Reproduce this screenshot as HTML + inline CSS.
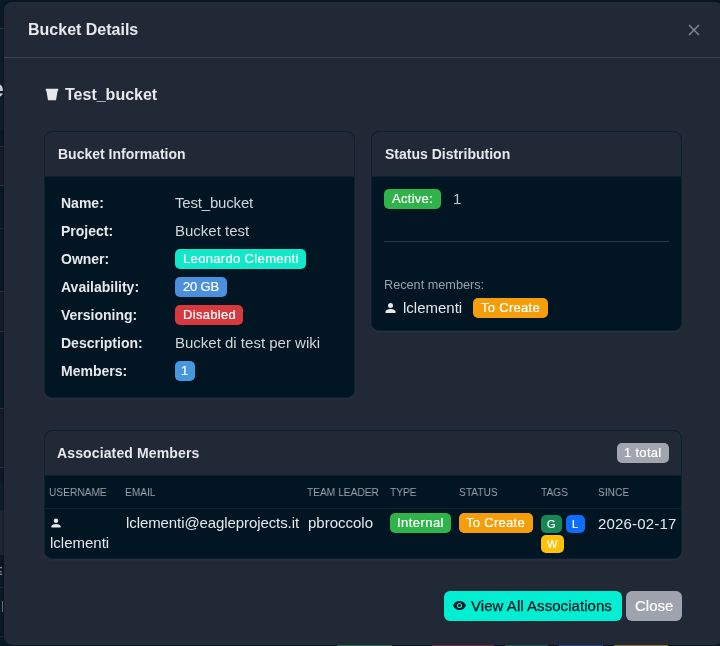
<!DOCTYPE html>
<html><head><meta charset="utf-8"><style>
html,body{margin:0;padding:0;width:720px;height:646px;overflow:hidden;background:#0a1927;font-family:"Liberation Sans",sans-serif}
.t{position:absolute;white-space:nowrap;will-change:transform}
.b{position:absolute}
.bd{position:absolute;text-align:center;white-space:nowrap}
.bd span{will-change:transform;display:inline-block;-webkit-text-stroke:0.2px currentColor}
</style></head><body>
<div class="b" style="left:0px;top:0px;width:4px;height:28px;background:#0c1a28;"></div>
<div class="b" style="left:0px;top:28px;width:4px;height:1px;background:#2a3442;"></div>
<div class="b" style="left:0px;top:29px;width:4px;height:100px;background:#0d1d2c;"></div>
<div class="b" style="left:0px;top:129px;width:4px;height:17px;background:#091826;"></div>
<div class="b" style="left:0px;top:146px;width:4px;height:1px;background:#2a3442;"></div>
<div class="b" style="left:0px;top:147px;width:4px;height:38px;background:#141c2b;"></div>
<div class="b" style="left:0px;top:185px;width:4px;height:1px;background:#2a3442;"></div>
<div class="b" style="left:0px;top:186px;width:4px;height:42px;background:#0a1927;"></div>
<div class="b" style="left:0px;top:228px;width:4px;height:1px;background:#14283a;"></div>
<div class="b" style="left:0px;top:229px;width:4px;height:62px;background:#0a1927;"></div>
<div class="b" style="left:0px;top:291px;width:4px;height:1px;background:#2a3442;"></div>
<div class="b" style="left:0px;top:292px;width:4px;height:39px;background:#141c2b;"></div>
<div class="b" style="left:0px;top:331px;width:4px;height:1px;background:#2a3442;"></div>
<div class="b" style="left:0px;top:332px;width:4px;height:76px;background:#0a1927;"></div>
<div class="b" style="left:0px;top:408px;width:4px;height:1px;background:#2a3442;"></div>
<div class="b" style="left:0px;top:409px;width:4px;height:58px;background:#141c2b;"></div>
<div class="b" style="left:0px;top:467px;width:4px;height:1px;background:#2a3442;"></div>
<div class="b" style="left:0px;top:468px;width:4px;height:16px;background:#0a1927;"></div>
<div class="b" style="left:0px;top:484px;width:4px;height:26px;background:#0d1e2d;"></div>
<div class="b" style="left:0px;top:510px;width:4px;height:45px;background:#1d2634;"></div>
<div class="b" style="left:0px;top:555px;width:4px;height:32px;background:#0a1927;"></div>
<div class="b" style="left:0px;top:587px;width:4px;height:1px;background:#1a2838;"></div>
<div class="b" style="left:0px;top:588px;width:4px;height:48px;background:#0a1927;"></div>
<div class="b" style="left:0px;top:636px;width:4px;height:1px;background:#1a2838;"></div>
<div class="b" style="left:0px;top:637px;width:4px;height:9px;background:#0a1927;"></div>
<div class="t" style="left:-9.5px;top:75.33px;font-size:23px;line-height:29px;font-weight:700;color:#c9ccd1;letter-spacing:0px;">e</div>
<div class="t" style="left:-4.6px;top:564.02px;font-size:11.5px;line-height:14px;font-weight:700;color:#8a9098;letter-spacing:0px;">E</div>
<div class="b" style="left:2px;top:601px;width:1px;height:11px;background:#6d737c;"></div>
<div class="b" style="left:337px;top:645px;width:55px;height:1px;background:#2f7d4a;"></div>
<div class="b" style="left:432px;top:645px;width:62px;height:1px;background:#8a3446;"></div>
<div class="b" style="left:505px;top:645px;width:43px;height:1px;background:#1f6a5a;"></div>
<div class="b" style="left:559px;top:645px;width:44px;height:1px;background:#2a5aa8;"></div>
<div class="b" style="left:614px;top:645px;width:54px;height:1px;background:#a88a2a;"></div>
<div class="b" style="left:4px;top:2px;width:719px;height:643px;background:#212937;border-radius:8px;box-shadow:0 0 3px rgba(0,0,0,.5)"></div>
<div class="t" style="left:28px;top:20.46px;font-size:16px;line-height:20px;font-weight:700;color:#e6e8eb;letter-spacing:0px;">Bucket Details</div>
<svg class="b" style="left:688px;top:24px" width="12" height="12" viewBox="0 0 12 12"><path d="M1 1L11 11M11 1L1 11" stroke="#858a93" stroke-width="1.4"/></svg>
<div class="b" style="left:4px;top:57px;width:720px;height:1px;background:#3a4251;"></div>
<svg class="b" style="left:45px;top:88px" width="14" height="13" viewBox="0 0 14 13"><path d="M0.8 0.8H13.2V2.8H12.6L11 12.2H3L1.4 2.8H0.8Z" fill="#e6e8eb"/></svg>
<div class="t" style="left:65px;top:84.76px;font-size:16px;line-height:20px;font-weight:700;color:#e6e8eb;letter-spacing:0px;">Test_bucket</div>
<div class="b" style="left:44px;top:131px;width:309px;height:265px;border:1px solid #0b2033;border-radius:8px;background:#011522;overflow:hidden;box-shadow:0 1px 3px rgba(255,255,255,.05)"><div style="position:absolute;left:0;top:0;right:0;height:44px;background:#212937;border-bottom:1px solid #0b2033"></div></div>
<div class="t" style="left:57.5px;top:145.15px;font-size:14px;line-height:18px;font-weight:700;color:#e6e8eb;letter-spacing:0px;">Bucket Information</div>
<div class="t" style="left:60.8px;top:194.15px;font-size:14px;line-height:18px;font-weight:700;color:#e6e8eb;letter-spacing:0px;">Name:</div>
<div class="t" style="left:60.8px;top:222.15px;font-size:14px;line-height:18px;font-weight:700;color:#e6e8eb;letter-spacing:0px;">Project:</div>
<div class="t" style="left:60.8px;top:250.15px;font-size:14px;line-height:18px;font-weight:700;color:#e6e8eb;letter-spacing:0px;">Owner:</div>
<div class="t" style="left:60.8px;top:278.15px;font-size:14px;line-height:18px;font-weight:700;color:#e6e8eb;letter-spacing:0px;">Availability:</div>
<div class="t" style="left:60.8px;top:306.15px;font-size:14px;line-height:18px;font-weight:700;color:#e6e8eb;letter-spacing:0px;">Versioning:</div>
<div class="t" style="left:60.8px;top:334.15px;font-size:14px;line-height:18px;font-weight:700;color:#e6e8eb;letter-spacing:0px;">Description:</div>
<div class="t" style="left:60.8px;top:362.15px;font-size:14px;line-height:18px;font-weight:700;color:#e6e8eb;letter-spacing:0px;">Members:</div>
<div class="t" style="left:175px;top:193.30px;font-size:15px;line-height:19px;font-weight:400;color:#d2d5da;letter-spacing:-0.18px;">Test_bucket</div>
<div class="t" style="left:175px;top:221.30px;font-size:15px;line-height:19px;font-weight:400;color:#d2d5da;letter-spacing:0px;">Bucket test</div>
<div class="bd" style="left:175px;top:249px;width:131px;height:20px;background:#10e8c9;border-radius:5px;font-size:13px;line-height:20px;color:#fff;letter-spacing:0.34px;font-weight:400"><span style="position:relative;top:0px">Leonardo Clementi</span></div>
<div class="bd" style="left:175px;top:277px;width:52px;height:20px;background:#4a90dc;border-radius:5px;font-size:13px;line-height:20px;color:#fff;letter-spacing:-0.18px;font-weight:400"><span style="position:relative;top:0px">20 GB</span></div>
<div class="bd" style="left:175px;top:305px;width:68px;height:20px;background:#d63a3f;border-radius:5px;font-size:13px;line-height:20px;color:#fff;letter-spacing:0.3px;font-weight:400"><span style="position:relative;top:0px">Disabled</span></div>
<div class="t" style="left:175px;top:333.30px;font-size:15px;line-height:19px;font-weight:400;color:#d2d5da;letter-spacing:0px;">Bucket di test per wiki</div>
<div class="bd" style="left:175px;top:361px;width:20px;height:20px;background:#4597e0;border-radius:5px;font-size:13px;line-height:20px;color:#fff;letter-spacing:0px;font-weight:400"><span style="position:relative;top:0px">1</span></div>
<div class="b" style="left:371px;top:131px;width:309px;height:198px;border:1px solid #0b2033;border-radius:8px;background:#011522;overflow:hidden;box-shadow:0 1px 3px rgba(255,255,255,.05)"><div style="position:absolute;left:0;top:0;right:0;height:44px;background:#212937;border-bottom:1px solid #0b2033"></div></div>
<div class="t" style="left:384.5px;top:145.15px;font-size:14px;line-height:18px;font-weight:700;color:#e6e8eb;letter-spacing:0px;">Status Distribution</div>
<div class="bd" style="left:384px;top:189px;width:57px;height:20px;background:#2fb34a;border-radius:5px;font-size:13px;line-height:20px;color:#fff;letter-spacing:0.29px;font-weight:400"><span style="position:relative;top:0px">Active:</span></div>
<div class="t" style="left:452.5px;top:188.70px;font-size:15px;line-height:19px;font-weight:400;color:#c3c7cc;letter-spacing:0px;">1</div>
<div class="b" style="left:384px;top:241px;width:285px;height:1px;background:#2a3644;"></div>
<div class="t" style="left:384.2px;top:276.60px;font-size:12.7px;line-height:16px;font-weight:400;color:#9ba1a9;letter-spacing:0px;">Recent members:</div>
<svg class="b" style="left:385px;top:303px" width="11" height="10" viewBox="0 0 11 10"><circle cx="5.5" cy="2.6" r="2.5" fill="#e6e8eb"/><path d="M0.5 10V8.6C0.5 6.9 3.6 6 5.5 6S10.5 6.9 10.5 8.6V10Z" fill="#e6e8eb"/></svg>
<div class="t" style="left:402.7px;top:298.00px;font-size:15px;line-height:19px;font-weight:400;color:#e6e8eb;letter-spacing:0px;">lclementi</div>
<div class="bd" style="left:473px;top:298px;width:75px;height:20px;background:#f59e0b;border-radius:5px;font-size:13px;line-height:20px;color:#fff;letter-spacing:0.3px;font-weight:400"><span style="position:relative;top:0px">To Create</span></div>
<div class="b" style="left:44px;top:430px;width:636px;height:127px;border:1px solid #0b2033;border-radius:8px;background:#011522;overflow:hidden;box-shadow:0 1px 3px rgba(255,255,255,.05)"><div style="position:absolute;left:0;top:0;right:0;height:44px;background:#212937;border-bottom:1px solid #0b2033"></div></div>
<div class="t" style="left:57px;top:444.15px;font-size:14px;line-height:18px;font-weight:700;color:#e6e8eb;letter-spacing:0.13px;">Associated Members</div>
<div class="bd" style="left:617px;top:443px;width:52px;height:20px;background:#a0a5ae;border-radius:5px;font-size:13px;line-height:20px;color:#fff;letter-spacing:0.3px;font-weight:400"><span style="position:relative;top:0px">1 total</span></div>
<div class="t" style="left:48.7px;top:485.12px;font-size:11.5px;line-height:14px;font-weight:400;color:#9ba1a9;letter-spacing:0px;transform:scaleX(0.885);transform-origin:0 0;">USERNAME</div>
<div class="t" style="left:124.8px;top:485.12px;font-size:11.5px;line-height:14px;font-weight:400;color:#9ba1a9;letter-spacing:0px;transform:scaleX(0.885);transform-origin:0 0;">EMAIL</div>
<div class="t" style="left:307px;top:485.12px;font-size:11.5px;line-height:14px;font-weight:400;color:#9ba1a9;letter-spacing:0px;transform:scaleX(0.885);transform-origin:0 0;">TEAM LEADER</div>
<div class="t" style="left:389.6px;top:485.12px;font-size:11.5px;line-height:14px;font-weight:400;color:#9ba1a9;letter-spacing:0px;transform:scaleX(0.885);transform-origin:0 0;">TYPE</div>
<div class="t" style="left:458.6px;top:485.12px;font-size:11.5px;line-height:14px;font-weight:400;color:#9ba1a9;letter-spacing:0px;transform:scaleX(0.885);transform-origin:0 0;">STATUS</div>
<div class="t" style="left:541px;top:485.12px;font-size:11.5px;line-height:14px;font-weight:400;color:#9ba1a9;letter-spacing:0px;transform:scaleX(0.885);transform-origin:0 0;">TAGS</div>
<div class="t" style="left:597.6px;top:485.12px;font-size:11.5px;line-height:14px;font-weight:400;color:#9ba1a9;letter-spacing:0px;transform:scaleX(0.885);transform-origin:0 0;">SINCE</div>
<div class="b" style="left:45px;top:508px;width:636px;height:1px;background:#142230;"></div>
<svg class="b" style="left:51px;top:518px" width="10" height="10" viewBox="0 0 11 10"><circle cx="5.5" cy="2.6" r="2.5" fill="#e6e8eb"/><path d="M0.5 10V8.6C0.5 6.9 3.6 6 5.5 6S10.5 6.9 10.5 8.6V10Z" fill="#e6e8eb"/></svg>
<div class="t" style="left:49.7px;top:532.80px;font-size:15px;line-height:19px;font-weight:400;color:#e6e8eb;letter-spacing:0px;">lclementi</div>
<div class="t" style="left:125.6px;top:513.30px;font-size:15px;line-height:19px;font-weight:400;color:#e6e8eb;letter-spacing:-0.09px;">lclementi@eagleprojects.it</div>
<div class="t" style="left:307.8px;top:513.30px;font-size:15px;line-height:19px;font-weight:400;color:#e6e8eb;letter-spacing:0px;">pbroccolo</div>
<div class="bd" style="left:390px;top:513px;width:61px;height:20px;background:#2fb34a;border-radius:5px;font-size:13px;line-height:20px;color:#fff;letter-spacing:0.45px;font-weight:400"><span style="position:relative;top:0px">Internal</span></div>
<div class="bd" style="left:459px;top:513px;width:74px;height:20px;background:#f59e0b;border-radius:5px;font-size:13px;line-height:20px;color:#fff;letter-spacing:0.3px;font-weight:400"><span style="position:relative;top:0px">To Create</span></div>
<div class="bd" style="left:541px;top:515px;width:21px;height:18px;background:#198754;border-radius:5px;font-size:11px;line-height:18px;color:#fff;letter-spacing:0px;font-weight:400"><span style="position:relative;top:0px">G</span></div>
<div class="bd" style="left:566px;top:515px;width:19px;height:18px;background:#0d6efd;border-radius:5px;font-size:11px;line-height:18px;color:#fff;letter-spacing:0px;font-weight:400"><span style="position:relative;top:0px">L</span></div>
<div class="bd" style="left:541px;top:535px;width:23px;height:18px;background:#ffc107;border-radius:5px;font-size:11px;line-height:18px;color:#fff;letter-spacing:0px;font-weight:400"><span style="position:relative;top:0px">W</span></div>
<div class="t" style="left:598.3px;top:513.60px;font-size:15px;line-height:19px;font-weight:400;color:#e6e8eb;letter-spacing:0.18px;">2026-02-17</div>
<div class="b" style="left:444px;top:591px;width:178px;height:30px;background:#00efd2;border-radius:6px"></div>
<svg class="b" style="left:453px;top:601px" width="13" height="9" viewBox="0 0 13 9"><path d="M6.5 0C3.5 0 1.2 2 0 4.5 1.2 7 3.5 9 6.5 9S11.8 7 13 4.5C11.8 2 9.5 0 6.5 0Z" fill="#04151f"/><circle cx="6.5" cy="4.5" r="2.6" fill="#00efd2"/><circle cx="6.5" cy="4.5" r="1.5" fill="#04151f"/></svg>
<div class="t" style="left:471.25px;top:596.30px;font-size:15px;line-height:19px;font-weight:400;color:#04151f;letter-spacing:0.05px;-webkit-text-stroke:0.25px #04151f;">View All Associations</div>
<div class="b" style="left:626px;top:591px;width:56px;height:30px;background:#9ea3ad;border-radius:6px"></div>
<div class="t" style="left:635px;top:596.30px;font-size:15px;line-height:19px;font-weight:400;color:#fff;letter-spacing:0px;-webkit-text-stroke:0.2px #fff;">Close</div>
</body></html>
